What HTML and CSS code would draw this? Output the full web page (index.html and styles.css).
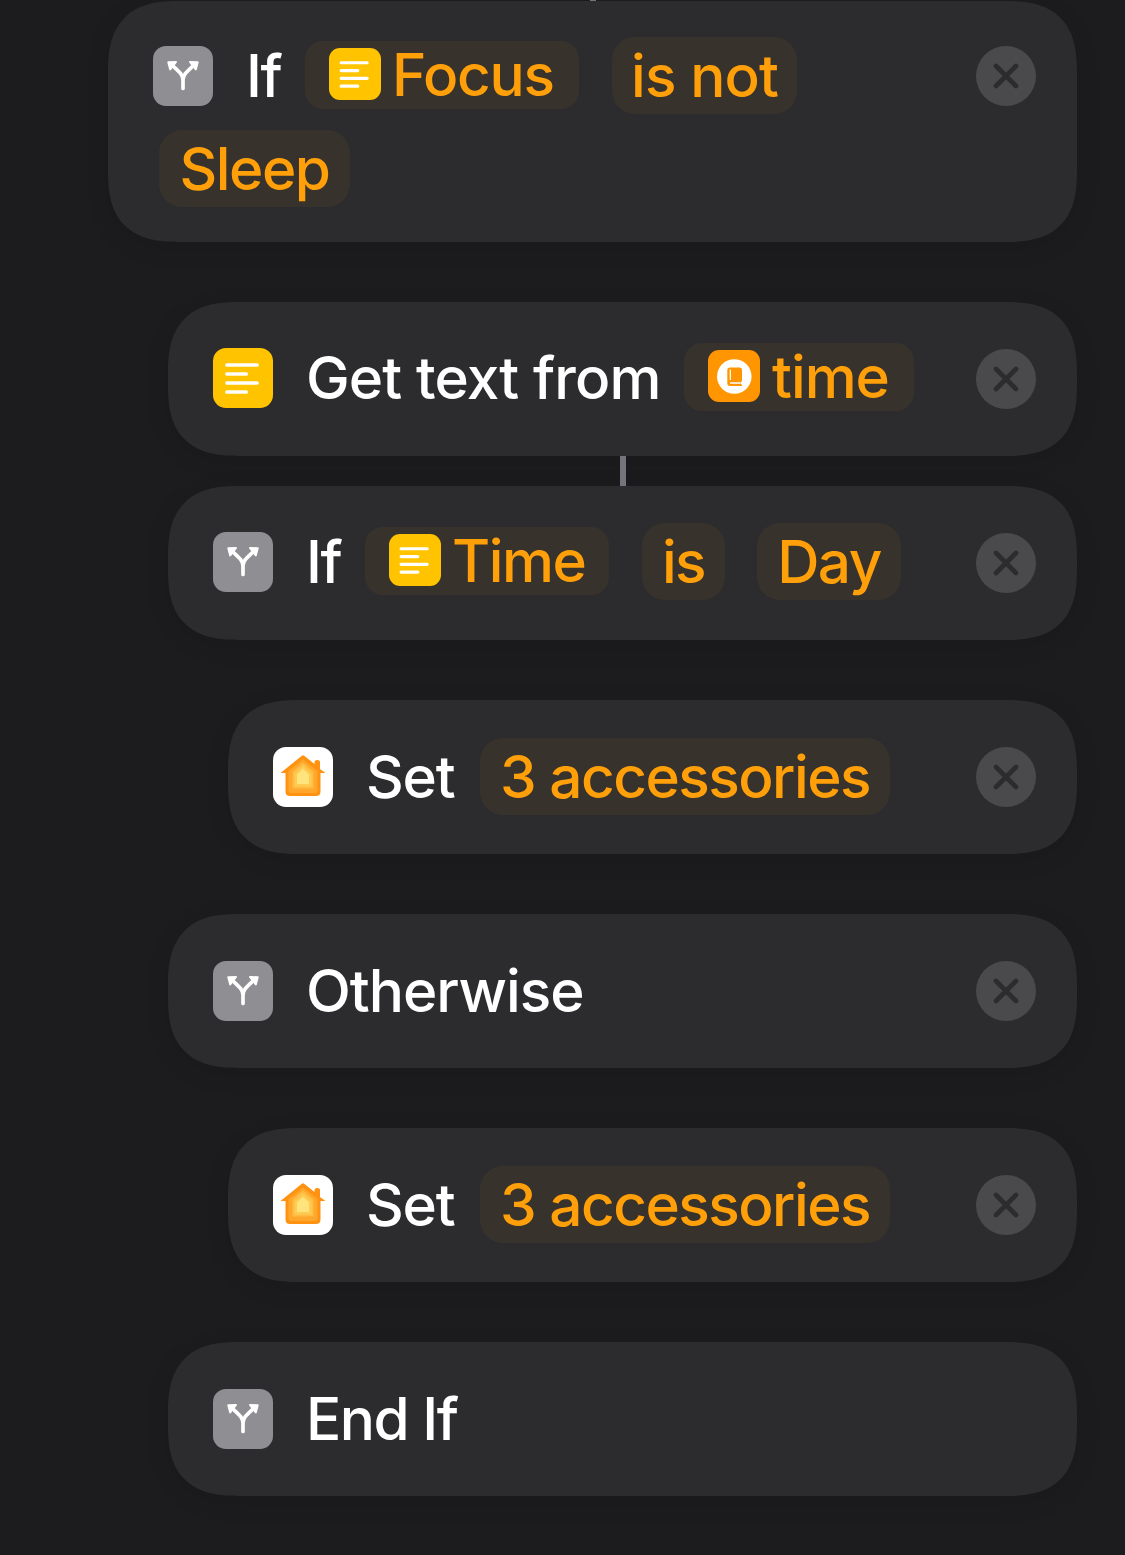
FILE: index.html
```html
<!DOCTYPE html>
<html lang="en">
<head>
<meta charset="utf-8">
<title>Shortcut</title>
<link rel="stylesheet" href="styles.css">
</head>
<body>
<svg class="defs" aria-hidden="true">
  <symbol id="branch" viewBox="0 0 60 60">
    <path d="M30 42.500V34C30 28.500 26 25.500 19.500 19.500M30 34C30 28.500 34 25.500 40.500 19.500" fill="none" stroke="#fff" stroke-width="3.700" stroke-linecap="round"/>
    <path d="M15.300 16.200L23 16L17.200 23.500ZM44.700 16.200L37 16L42.800 23.500Z" fill="#fff" stroke="#fff" stroke-width="2" stroke-linejoin="round"/>
  </symbol>
  <symbol id="lines" viewBox="0 0 60 60">
    <path d="M14 17H44M14 26H33.200M14 35H44M14 44H33.200" fill="none" stroke="#fff" stroke-width="3.700" stroke-linecap="round"/>
  </symbol>
  <symbol id="book" viewBox="0 0 52 52">
    <circle cx="26.300" cy="26.500" r="17.300" fill="#fff"/>
    <path d="M22 17.500H31.500Q34 17.500 34 20V31.500H33V34.500H34V36H22Q19.300 36 19.300 33V20.500Q19.300 17.500 22 17.500Z" fill="#ff9500"/>
    <path d="M22.300 19.500V30M22 33H32.800" fill="none" stroke="#fff" stroke-width="1.300"/>
  </symbol>
  <symbol id="house" viewBox="0 0 60 60">
    <path d="M41.500 22V15Q41.500 13 44.200 13Q47 13 47 15V22L52.500 26H47.500V44.500Q47.500 49 43 49H17Q12.500 49 12.500 44.500V26H7.500L28.800 8.800Q30 7.800 31.200 8.800L41.500 17Z" fill="#ff9211"/>
    <path d="M30 12.500L44.500 24V43.500Q44.500 46 42 46H18Q15.500 46 15.500 43.500V24Z" fill="#ffa72c"/>
    <path d="M30 15.500L40.500 24.500V41.500H19.500V24.500Z" fill="#ffbd43"/>
    <path d="M30 18.500L38.500 26.500V39.500H21.500V26.500Z" fill="#ffcc53"/>
    <path d="M30 21.800L36 27.500V37H24V27.500Z" fill="#ffe47d"/>
  </symbol>
  <symbol id="cross" viewBox="0 0 60 60">
    <path d="M20 20L40 40M40 20L20 40" fill="none" stroke="#2c2c2e" stroke-width="4.600" stroke-linecap="round"/>
  </symbol>
</svg>

<main class="flow">
  <div class="connector connector--top"></div>
  <section class="card card--first">
    <svg class="icon icon--gray"><use href="#branch"/></svg>
    <div class="lines">
      <div class="line">
        <span class="word word--if">If</span>
        <span class="token token--focus"><svg class="token-icon icon--yellow"><use href="#lines"/></svg><span>Focus</span></span>
        <span class="chip chip--is-not"><span>is not</span></span>
      </div>
      <div class="line line--wrapped">
        <span class="chip chip--sleep"><span>Sleep</span></span>
      </div>
    </div>
    <svg class="close"><use href="#cross"/></svg>
  </section>

  <section class="card card--raised indent-1">
    <svg class="icon icon--yellow"><use href="#lines"/></svg>
    <div class="lines">
      <div class="line">
        <span class="word word--get">Get text from</span>
        <span class="token token--var"><svg class="token-icon icon--orange"><use href="#book"/></svg><span>time</span></span>
      </div>
    </div>
    <svg class="close"><use href="#cross"/></svg>
  </section>
  <div class="connector"></div>
  <section class="card card--raised indent-1">
    <svg class="icon icon--gray"><use href="#branch"/></svg>
    <div class="lines">
      <div class="line">
        <span class="word word--if">If</span>
        <span class="token token--time"><svg class="token-icon icon--yellow"><use href="#lines"/></svg><span>Time</span></span>
        <span class="chip chip--is"><span>is</span></span>
        <span class="chip chip--day"><span>Day</span></span>
      </div>
    </div>
    <svg class="close"><use href="#cross"/></svg>
  </section>

  <section class="card indent-2">
    <svg class="icon icon--white"><use href="#house"/></svg>
    <div class="lines">
      <div class="line">
        <span class="word word--set">Set</span>
        <span class="chip chip--accessories"><span>3 accessories</span></span>
      </div>
    </div>
    <svg class="close"><use href="#cross"/></svg>
  </section>

  <section class="card indent-1">
    <svg class="icon icon--gray"><use href="#branch"/></svg>
    <div class="lines">
      <div class="line"><span class="word word--otherwise">Otherwise</span></div>
    </div>
    <svg class="close"><use href="#cross"/></svg>
  </section>

  <section class="card indent-2">
    <svg class="icon icon--white"><use href="#house"/></svg>
    <div class="lines">
      <div class="line">
        <span class="word word--set">Set</span>
        <span class="chip chip--accessories"><span>3 accessories</span></span>
      </div>
    </div>
    <svg class="close"><use href="#cross"/></svg>
  </section>

  <section class="card indent-1">
    <svg class="icon icon--gray"><use href="#branch"/></svg>
    <div class="lines">
      <div class="line"><span class="word">End If</span></div>
    </div>
  </section>
</main>
</body>
</html>
```
FILE: styles.css
```css
* { box-sizing: border-box; }

body {
  margin: 0;
  background: #1c1c1e;
  color: #fff;
  font: 500 58.500px/78px Inter, "Liberation Sans", sans-serif;
  letter-spacing: -1.500px;
}

.defs { position: absolute; width: 0; height: 0; }

.flow {
  display: flex;
  flex-direction: column;
  min-height: 1555px;
  padding: 0 48px 0 108px;
}

.card {
  display: flex;
  align-items: flex-start;
  height: 154px;
  margin-bottom: 60px;
  padding: 47px 41px 0 45px;
  border-radius: 54px;
  background: #2c2c2e;
  box-shadow: 0 6px 24px rgba(0, 0, 0, 0.1);
}

@supports (corner-shape: superellipse(1.4)) {
  .card { border-radius: 72px; corner-shape: superellipse(1.4); }
}

.card--first { height: 241px; padding-top: 45px; }
.indent-1 { margin-left: 60px; }
.indent-2 { margin-left: 120px; }
.card:has(+ .connector) { margin-bottom: 0; }

.connector {
  z-index: 1;
  flex: none;
  width: 6px;
  height: 30px;
  margin-left: 512px;
  background: #74757c;
}

.connector--top { height: 1px; margin-left: 482px; }

.icon {
  flex: none;
  width: 60px;
  height: 60px;
  border-radius: 13px;
}

.icon--gray { background: #8e8e93; }
.icon--yellow { background: #ffc300; }
.icon--orange { background: #ff9500; }
.icon--white { background: #fff; }

.close {
  flex: none;
  width: 60px;
  height: 60px;
  border-radius: 50%;
  background: #4a4a4c;
}

.lines {
  display: flex;
  flex: 1;
  flex-direction: column;
  gap: 16px;
  min-width: 0;
  margin-top: -9px;
  padding-left: 32px;
}

.line {
  display: flex;
  align-items: center;
  height: 77px;
  white-space: nowrap;
}

.line--wrapped { margin-left: -86px; }

.card--raised { padding-top: 46px; }
.card--raised .close { margin-top: 1px; }

.word { flex: none; height: 77px; padding-left: 1px; }
.word--if { width: 60px; }
.word--get { width: 379px; letter-spacing: -0.900px; }
.word--set { width: 115px; letter-spacing: -1.200px; }
.word--otherwise { letter-spacing: -1px; }

.token, .chip {
  display: flex;
  flex: none;
  align-items: center;
  background: #38322c;
  color: #ff9f0a;
}

.token {
  height: 68px;
  margin-top: -1px;
  padding-left: 24px;
  border-radius: 18px;
  gap: 11px;
}

.token-icon {
  flex: none;
  width: 52px;
  height: 52px;
  margin-top: -2px;
  border-radius: 11px;
}

.chip {
  justify-content: center;
  height: 77px;
  border-radius: 23px;
}

.token--focus { width: 274px; letter-spacing: -1.300px; }
.token--var { width: 230px; gap: 12px; letter-spacing: -1px; }
.token--time { width: 244px; }
.chip--is-not { width: 185px; margin-left: 33px; letter-spacing: -0.900px; }
.chip--is { width: 83px; margin-left: 33px; }
.chip--day { width: 144px; margin-left: 32px; }
.chip--sleep { width: 191px; }
.chip--accessories { width: 410px; }
```
